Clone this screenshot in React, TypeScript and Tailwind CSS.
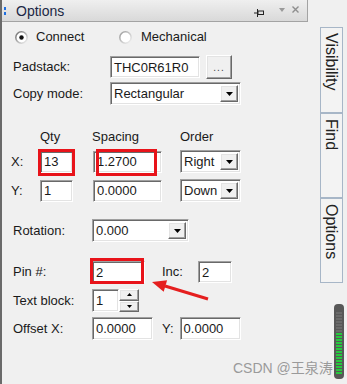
import React from "react";

const sunken =
  "bg-white border border-t-[#a0a0a0] border-l-[#a0a0a0] border-b-white border-r-white shadow-[inset_1px_1px_0_#696969,inset_-1px_-1px_0_#e3e3e3]";
const raised =
  "bg-[#f0f0f0] border border-t-white border-l-white border-b-[#696969] border-r-[#696969] shadow-[inset_-1px_-1px_0_#a0a0a0,inset_1px_1px_0_#e3e3e3]";

function DownTri() {
  return (
    <svg width="7" height="4" viewBox="0 0 7 4">
      <path d="M0 0H7L3.5 4Z" fill="#000" />
    </svg>
  );
}

function Field({ className, value }: { className: string; value: string }) {
  return (
    <div className={`${sunken} flex items-center pl-[3px] leading-none ${className}`}>
      {value}
    </div>
  );
}

function Select({ className, value }: { className: string; value: string }) {
  return (
    <div className={`${sunken} h-[23px] flex items-stretch p-[2px] ${className}`}>
      <span className="flex-1 flex items-center pl-[1px] leading-none">{value}</span>
      <div className={`${raised} w-[18px] flex items-center justify-center`}>
        <DownTri />
      </div>
    </div>
  );
}

function Radio({ checked, id }: { checked: boolean; id: string }) {
  return (
    <svg width="13" height="13" viewBox="0 0 13 13">
      <defs>
        <linearGradient id={id} x1="0" y1="0" x2="1" y2="1">
          <stop offset="0" stopColor={checked ? "#6c6c6c" : "#9a9a9a"} />
          <stop offset="1" stopColor="#f4f4f4" />
        </linearGradient>
      </defs>
      <circle cx="6.5" cy="6.5" r="5.7" fill="#fff" stroke={`url(#${id})`} strokeWidth="1.6" />
      {checked && <circle cx="6.5" cy="6.5" r="2.2" fill="#111" />}
    </svg>
  );
}

function Meter() {
  const stripes: React.ReactElement[] = [];
  for (let y = 8; y < 70; y += 3) {
    const green = y >= 28;
    stripes.push(
      <rect key={y} x="2" y={y} width="6" height="2" fill={green ? "#26c83f" : "#6a6a6a"} />
    );
  }
  return (
    <svg width="10" height="75" viewBox="0 0 10 75">
      <rect x="0" y="0" width="10" height="75" rx="4" fill="#585858" />
      {stripes}
    </svg>
  );
}

export default function App() {
  return (
    <div className="relative w-[347px] h-[384px] overflow-hidden bg-[#f0f0f0] flex font-['Liberation_Sans',Arial,sans-serif] text-[13px] text-[#1a1a1a]">
      {/* Main panel */}
      <div className="w-[308px] h-full border-l-2 border-[#6a6a6a] flex flex-col">
        {/* Title bar */}
        <div className="h-[22px] flex items-center bg-gradient-to-b from-[#efefef] to-[#d9d9d9] border-b border-r border-[#a3a3a3]">
          <div className="ml-[2px] flex flex-col gap-[2px]">
            <div className="w-[2px] h-[3px] bg-[#1e6fe0]" />
            <div className="w-[2px] h-[3px] bg-[#1e6fe0]" />
          </div>
          <span className="ml-[10px] text-[14px] leading-none text-[#1b2745]">Options</span>
          <div className="flex-1" />
          <svg width="10" height="8" viewBox="0 0 10 8" className="mt-[4px]">
            <path d="M0 4H3" stroke="#222" strokeWidth="1" />
            <path d="M3.5 0V8" stroke="#222" strokeWidth="1" />
            <rect x="4" y="2" width="5.5" height="3.5" fill="none" stroke="#222" strokeWidth="1" />
          </svg>
          <svg width="6" height="4" viewBox="0 0 6 4" className="ml-[15px] -mt-[2px]">
            <path d="M0 0H6L3 4Z" fill="#9a9a9a" />
          </svg>
          <svg width="7" height="7" viewBox="0 0 7 7" className="ml-[7px] mr-[8px] -mt-[2px]">
            <path d="M0.5 0.5L6.5 6.5M6.5 0.5L0.5 6.5" stroke="#8e8e8e" strokeWidth="1.4" />
          </svg>
        </div>

        {/* Radio row */}
        <div className="mt-[5px] h-[20px] flex items-center pl-[13px]">
          <div className="w-[104px] flex items-center">
            <Radio checked id="r1" />
            <span className="ml-[8px]">Connect</span>
          </div>
          <Radio checked={false} id="r2" />
          <span className="ml-[9px]">Mechanical</span>
        </div>

        {/* Padstack */}
        <div className="mt-[8px] h-[24px] flex items-center pl-[11px]">
          <span className="w-[97px]">Padstack:</span>
          <Field className="w-[90px] h-[22px]" value="THC0R61R0" />
          <div className={`${raised} ml-[6px] w-[26px] h-[24px] flex items-end justify-center pb-[5px]`}>
            <span className="text-[10px] leading-none text-[#444] tracking-[1px]">...</span>
          </div>
        </div>

        {/* Copy mode */}
        <div className="mt-[3px] h-[23px] flex items-center pl-[11px]">
          <span className="w-[97px]">Copy mode:</span>
          <Select className="w-[131px]" value="Rectangular" />
        </div>

        {/* Headers */}
        <div className="mt-[24px] h-[14px] flex items-center pl-[38px] leading-none">
          <span className="w-[52px]">Qty</span>
          <span className="w-[88px]">Spacing</span>
          <span>Order</span>
        </div>

        {/* X row */}
        <div className="mt-[7px] h-[23px] flex items-center pl-[9px]">
          <span className="w-[29px]">X:</span>
          <div className="relative">
            <Field className="w-[33px] h-[22px]" value="13" />
            <div className="absolute -top-[2px] -bottom-[3px] -left-[2px] -right-[2px] border-[3px] border-[#e8131a]" />
          </div>
          <div className="relative ml-[20px]">
            <Field className="w-[69px] h-[22px]" value="1.2700" />
            <div className="absolute -top-[2px] -bottom-[3px] left-[3px] right-[5px] border-[3px] border-[#e8131a]" />
          </div>
          <Select className="ml-[18px] w-[61px]" value="Right" />
        </div>

        {/* Y row */}
        <div className="mt-[6px] h-[23px] flex items-center pl-[9px]">
          <span className="w-[29px]">Y:</span>
          <Field className="w-[33px] h-[22px]" value="1" />
          <Field className="ml-[20px] w-[69px] h-[22px]" value="0.0000" />
          <Select className="ml-[18px] w-[61px]" value="Down" />
        </div>

        {/* Rotation */}
        <div className="mt-[17px] h-[23px] flex items-center pl-[11px]">
          <span className="w-[79px]">Rotation:</span>
          <Select className="w-[97px]" value="0.000" />
        </div>

        {/* Pin # */}
        <div className="mt-[19px] h-[22px] flex items-center pl-[11px]">
          <span className="w-[79px]">Pin #:</span>
          <div className="relative">
            <Field className="w-[53px] h-[22px]" value="2" />
            <div className="absolute -top-[3px] -bottom-[1px] -left-[2px] right-[1px] border-[3px] border-[#e8131a]" />
          </div>
          <span className="ml-[17px]">Inc:</span>
          <Field className="ml-[15px] w-[34px] h-[22px]" value="2" />
        </div>

        {/* Text block */}
        <div className="mt-[6px] h-[23px] flex items-center pl-[11px]">
          <span className="w-[79px]">Text block:</span>
          <Field className="w-[27px] h-[23px]" value="1" />
          <div className="w-[20px] h-[23px] flex flex-col">
            <div className={`${raised} flex-1 flex items-center justify-center`}>
              <svg width="5" height="3" viewBox="0 0 5 3">
                <path d="M2.5 0L5 3H0Z" fill="#000" />
              </svg>
            </div>
            <div className={`${raised} flex-1 flex items-center justify-center`}>
              <svg width="5" height="3" viewBox="0 0 5 3">
                <path d="M0 0H5L2.5 3Z" fill="#000" />
              </svg>
            </div>
          </div>
        </div>

        {/* Offset */}
        <div className="mt-[5px] h-[23px] flex items-center pl-[11px]">
          <span className="w-[79px]">Offset X:</span>
          <Field className="w-[61px] h-[23px]" value="0.0000" />
          <span className="ml-[9px]">Y:</span>
          <Field className="ml-[6px] w-[61px] h-[23px]" value="0.0000" />
        </div>
      </div>

      {/* Right side: tabs */}
      <div className="flex-1 flex flex-col">
        <div className="ml-[12px] mt-[27px] w-[23px] flex flex-col border-l border-r border-b border-[#a7b6c7] bg-[#f3f3f3]">
          {["Visibility", "Find", "Options"].map((t, i) => (
            <div
              key={t}
              className={`h-[85px] flex justify-center pt-[5px] border-[#a7b6c7] ${i === 0 ? "border-t" : "border-t-2"}`}
            >
              <span className="[writing-mode:vertical-rl] text-[16px] leading-[21px] text-[#222]">{t}</span>
            </div>
          ))}
        </div>
        <div className="ml-[26px] mt-[21px]">
          <Meter />
        </div>
      </div>

      {/* Red arrow annotation */}
      <svg className="absolute left-[145px] top-[274px]" width="70" height="30" viewBox="0 0 70 30">
        <path d="M63 25L20 12" stroke="#e51f1f" strokeWidth="3" />
        <path d="M7 8L18.7 17.8L22.1 6.3Z" fill="#e51f1f" />
      </svg>

      {/* Watermark */}
      <div className="absolute left-[233px] top-[360px] text-[14px] leading-[16px] text-[#9a9a9a] font-['Liberation_Sans','Noto_Sans_CJK_SC',sans-serif]">
        CSDN @王泉涛
      </div>
    </div>
  );
}
